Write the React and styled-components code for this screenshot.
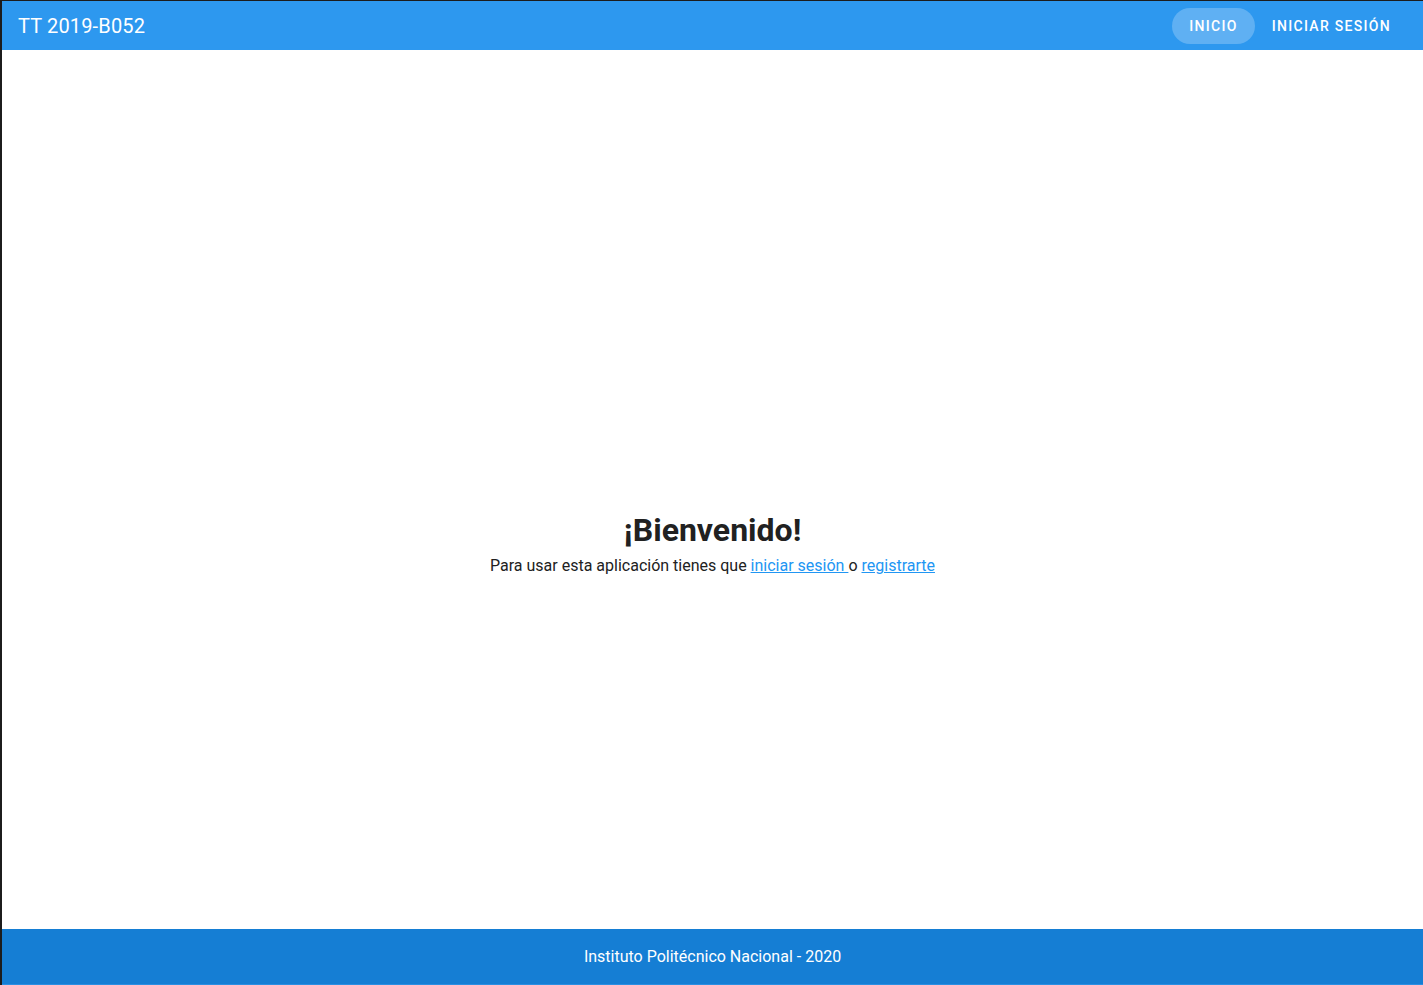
import React from "react";
import styled, { createGlobalStyle } from "styled-components";

const Global = createGlobalStyle`
  html, body { margin: 0; padding: 0; background: #1c1c1c; }
  body { font-family: Roboto, "Liberation Sans", sans-serif; }
  * { box-sizing: border-box; }
`;

const Page = styled.div`
  margin: 1px 0 0 2px;
  height: 984px;
  display: flex;
  flex-direction: column;
  background: #ffffff;
`;

const Header = styled.header`
  height: 49px;
  flex: none;
  background: #2d98ef;
  color: #fff;
  display: flex;
  align-items: center;
  padding: 1px 15px 0 16px;
`;

const Title = styled.div`
  font-size: 20px;
  font-weight: 400;
  letter-spacing: 0.15px;
  flex: 1;
`;

const Nav = styled.nav`
  display: flex;
  align-items: center;
  gap: 0;
`;

const NavButton = styled.a`
  height: 36px;
  padding: 0 17px;
  border-radius: 18px;
  display: inline-flex;
  align-items: center;
  font-size: 14px;
  font-weight: 500;
  letter-spacing: 1.3px;
  text-transform: uppercase;
  color: #fff;
  text-decoration: none;
  background: ${(p) => (p.$active ? "rgba(255,255,255,0.24)" : "transparent")};
`;

const Main = styled.main`
  flex: 1;
  display: flex;
  flex-direction: column;
  align-items: center;
  justify-content: center;
  padding-top: 109px;
  color: #212121;
`;

const Heading = styled.h1`
  margin: 0 0 4px;
  font-size: 32px;
  font-weight: 700;
  line-height: 40px;
`;

const Text = styled.p`
  margin: 0;
  font-size: 16px;
  line-height: 24px;
`;

const Link = styled.a`
  color: #2196f3;
  text-decoration: underline;
`;

const Footer = styled.footer`
  height: 56px;
  flex: none;
  background: #157ed4;
  border-bottom: 1px solid #2a8fe3;
  color: #fff;
  display: flex;
  align-items: center;
  justify-content: center;
  font-size: 16px;
`;

export default function App() {
  return (
    <>
      <Global />
      <Page>
        <Header>
          <Title>TT 2019-B052</Title>
          <Nav>
            <NavButton $active href="#">Inicio</NavButton>
            <NavButton href="#">Iniciar sesión</NavButton>
          </Nav>
        </Header>
        <Main>
          <Heading>¡Bienvenido!</Heading>
          <Text>
            Para usar esta aplicación tienes que <Link href="#">iniciar sesión </Link>o{" "}
            <Link href="#">registrarte</Link>
          </Text>
        </Main>
        <Footer>Instituto Politécnico Nacional - 2020</Footer>
      </Page>
    </>
  );
}
